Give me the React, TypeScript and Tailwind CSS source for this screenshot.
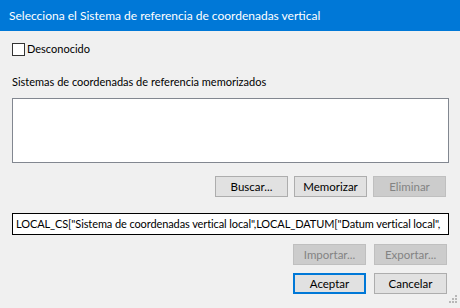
import React from "react";

const font = { fontFamily: 'Lato, "Noto Sans", Arial, sans-serif' };

const Btn = ({ label, disabled, primary }: { label: string; disabled?: boolean; primary?: boolean }) => (
  <button
    className={
      "w-[73px] h-[21px] flex items-center justify-center text-[11.5px] leading-none " +
      (disabled
        ? "bg-[#cccccc] border border-[#bfbfbf] text-[#838383]"
        : primary
        ? "bg-[#e1e1e1] border-2 border-[#0078d7] text-black"
        : "bg-[#e1e1e1] border border-[#adadad] text-black")
    }
  >
    {label}
  </button>
);

export default function App() {
  return (
    <div className="w-[460px] h-[308px] bg-[#f0f0f0] relative overflow-hidden" style={font}>
      <div className="h-[31px] bg-[#0078d7] text-white text-[12px] flex items-center pl-[9px]">
        Selecciona el Sistema de referencia de coordenadas vertical
      </div>

      <div className="pl-[12px] pr-[11px]">
        <label className="mt-[12px] h-[13px] flex items-center gap-[2px] text-[11px] text-black">
          <span className="w-[13px] h-[13px] border border-[#333333] bg-white" />
          Desconocido
        </label>

        <div className="mt-[18px] text-[11px] leading-[16px] text-black">
          Sistemas de coordenadas de referencia memorizados
        </div>

        <div className="mt-[8px] h-[65px] bg-white border border-[#828790]" />

        <div className="mt-[13px] flex justify-end gap-[6px] pr-[3px]">
          <Btn label="Buscar..." />
          <Btn label="Memorizar" />
          <Btn label="Eliminar" disabled />
        </div>

        <div className="mt-[16px] h-[22px] bg-white border border-black flex items-center pl-[3px] overflow-hidden whitespace-nowrap text-[11px] tracking-[-0.1px] text-black">
          LOCAL_CS["Sistema de coordenadas vertical local",LOCAL_DATUM["Datum vertical local",
        </div>

        <div className="mt-[9px] flex justify-end gap-[8px] pr-[2px]">
          <Btn label="Importar..." disabled />
          <Btn label="Exportar..." disabled />
        </div>

        <div className="mt-[8px] flex justify-end gap-[8px] pr-[2px]">
          <Btn label="Aceptar" primary />
          <Btn label="Cancelar" />
        </div>
      </div>

      <svg className="absolute right-[3px] bottom-[3px]" width="10" height="10" viewBox="0 0 10 10">
        <g fill="#b8b8b8">
          <rect x="8" y="0" width="2" height="2" />
          <rect x="5" y="3" width="2" height="2" />
          <rect x="8" y="3" width="2" height="2" />
          <rect x="2" y="6" width="2" height="2" />
          <rect x="5" y="6" width="2" height="2" />
          <rect x="8" y="6" width="2" height="2" />
        </g>
      </svg>
    </div>
  );
}
